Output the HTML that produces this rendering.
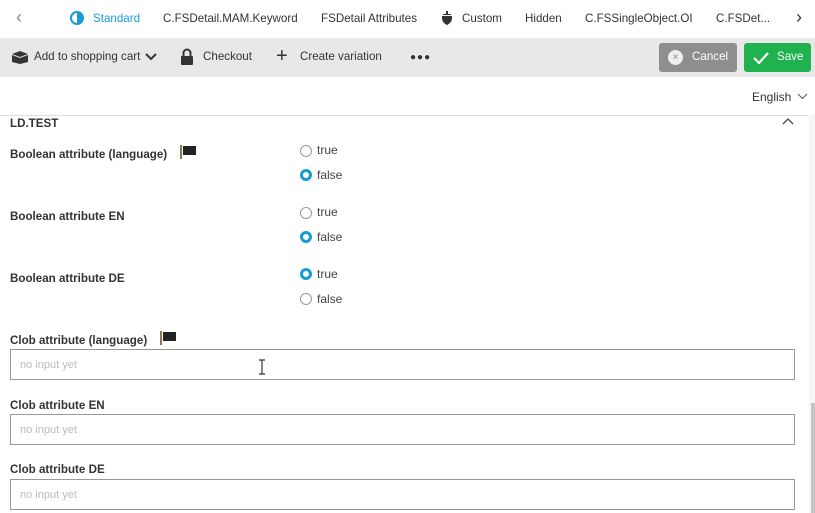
<!DOCTYPE html>
<html><head><style>
*{margin:0;padding:0;box-sizing:border-box}
body{width:815px;height:513px;overflow:hidden;background:#fff;font-family:"Liberation Sans",sans-serif;font-size:12px;color:#333;position:relative}
.a{position:absolute;white-space:nowrap}
.tab{top:12px;font-size:11.6px;color:#333}
.tb{top:50px;font-size:11.6px;color:#333}
.lbl{font-weight:bold;font-size:11.6px;color:#333}
.r{font-size:12px;color:#444}
.rad{position:absolute;width:12px;height:12px;border-radius:50%;border:1px solid #999;background:#fff}
.rad.on{border:3px solid #1a9bd7}
.inp{position:absolute;left:10px;width:785px;height:31px;border:1px solid #999;background:#fff;font-size:11px;color:#bbb;padding:9px 9px}
</style></head><body>
<div class="a tab" style="left:16px;top:7px;font-size:18px;color:#888">‹</div>
<svg class="a" style="left:70px;top:11px" width="14" height="14"><circle cx="7" cy="7" r="6" fill="none" stroke="#1a9bd7" stroke-width="2"/><path d="M7 1a6 6 0 0 1 0 12z" fill="#1a9bd7"/></svg>
<div class="a tab" style="left:93px;color:#1a9bd7">Standard</div>
<div class="a tab" style="left:163px">C.FSDetail.MAM.Keyword</div>
<div class="a tab" style="left:321px">FSDetail Attributes</div>
<svg class="a" style="left:441px;top:11px" width="12" height="14"><path d="M1 5h10v2c0 4-3 6-5 7-2-1-5-3-5-7z M2 3h8v1H2z M5 0h2v3H5z" fill="#333"/></svg>
<div class="a tab" style="left:462px">Custom</div>
<div class="a tab" style="left:525px">Hidden</div>
<div class="a tab" style="left:585px">C.FSSingleObject.OI</div>
<div class="a tab" style="left:716px">C.FSDet...</div>
<div class="a tab" style="left:796px;top:7px;font-size:18px">›</div>

<div class="a" style="left:0;top:38px;width:815px;height:39px;background:#e8e8e8"></div>
<svg class="a" style="left:11px;top:50px" width="18" height="14"><path d="M1 4l8-3 8 3-8 3z M1 5l8 3 8-3v7l-8 2-8-2z" fill="#333"/></svg>
<div class="a tb" style="left:34px">Add to shopping cart</div>
<svg class="a" style="left:145px;top:53px" width="12" height="8"><path d="M1 1l5 5 5-5" stroke="#333" stroke-width="2" fill="none"/></svg>
<svg class="a" style="left:180px;top:48px" width="14" height="17"><path d="M3.5 8V5a3.5 3.5 0 0 1 7 0v3" stroke="#333" stroke-width="2" fill="none"/><rect x="1" y="8" width="12" height="9" rx="1" fill="#333"/></svg>
<div class="a tb" style="left:203px">Checkout</div>
<div class="a" style="left:276px;top:45px;font-size:20px;color:#333">+</div>
<div class="a tb" style="left:300px">Create variation</div>
<div class="a tb" style="left:410px;top:52px;font-weight:bold;font-size:10px;letter-spacing:1px">●●●</div>
<div class="a" style="left:659px;top:43px;width:78px;height:29px;background:#8e8e8e;border-radius:3px"></div>
<div class="a" style="left:668px;top:50px;width:15px;height:15px;border-radius:50%;background:#eee;color:#888;font-size:10px;text-align:center;line-height:15px">×</div>
<div class="a tb" style="left:692px;color:#fff">Cancel</div>
<div class="a" style="left:744px;top:43px;width:67px;height:29px;background:#1fb24e;border-radius:3px"></div>
<svg class="a" style="left:753px;top:51px" width="16" height="13"><path d="M1 7l5 5 9-10" stroke="#fff" stroke-width="2.2" fill="none"/></svg>
<div class="a tb" style="left:777px;color:#fff">Save</div>

<div class="a" style="left:752px;top:90px;font-size:12px">English</div>
<svg class="a" style="left:797px;top:93px" width="11" height="7"><path d="M1 1l4.5 4.5L10 1" stroke="#555" fill="none"/></svg>
<div class="a" style="left:0;top:115px;width:808px;height:1px;background:#ddd"></div>
<div class="a" style="left:809px;top:115px;width:6px;height:398px;background:#f6f6f6"></div>
<div class="a" style="left:811px;top:403px;width:4px;height:110px;background:#c4c4c4"></div>
<div class="a lbl" style="left:10px;top:117px">LD.TEST</div>
<svg class="a" style="left:782px;top:118px" width="12" height="8"><path d="M1 6l5-5 5 5" stroke="#444" stroke-width="1.3" fill="none"/></svg>

<div class="a lbl" style="left:10px;top:148px">Boolean attribute (language)</div>
<svg class="a" style="left:180px;top:145px" width="18" height="14"><rect x="0" y="0" width="2" height="14" fill="#8a7a5a"/><path d="M3 1h13v9H3z" fill="#222"/></svg>
<div class="rad" style="left:300px;top:145px"></div><div class="a r" style="left:317px;top:143px">true</div>
<div class="rad on" style="left:300px;top:169px"></div><div class="a r" style="left:317px;top:168px">false</div>

<div class="a lbl" style="left:10px;top:210px">Boolean attribute EN</div>
<div class="rad" style="left:300px;top:207px"></div><div class="a r" style="left:317px;top:205px">true</div>
<div class="rad on" style="left:300px;top:231px"></div><div class="a r" style="left:317px;top:230px">false</div>

<div class="a lbl" style="left:10px;top:272px">Boolean attribute DE</div>
<div class="rad on" style="left:300px;top:268px"></div><div class="a r" style="left:317px;top:267px">true</div>
<div class="rad" style="left:300px;top:293px"></div><div class="a r" style="left:317px;top:292px">false</div>

<div class="a lbl" style="left:10px;top:334px">Clob attribute (language)</div>
<svg class="a" style="left:160px;top:331px" width="18" height="14"><rect x="0" y="0" width="2" height="14" fill="#8a7a5a"/><path d="M3 1h13v9H3z" fill="#222"/></svg>
<div class="inp" style="top:349px">no input yet</div>
<svg class="a" style="left:258px;top:359px" width="8" height="16"><path d="M1 1h6M4 1v14M1 15h6" stroke="#333" stroke-width="1.2" fill="none"/></svg>
<div class="a lbl" style="left:10px;top:399px">Clob attribute EN</div>
<div class="inp" style="top:414px">no input yet</div>
<div class="a lbl" style="left:10px;top:463px">Clob attribute DE</div>
<div class="inp" style="top:479px">no input yet</div>
</body></html>
